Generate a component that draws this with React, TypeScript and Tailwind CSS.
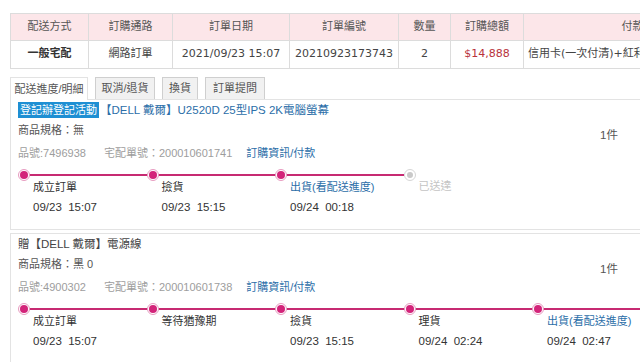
import React from "react";

type Step = { label: string; time?: string; link?: boolean; pending?: boolean };

type Item = {
  badge?: string;
  title: string;
  titleBlue?: boolean;
  spec: string;
  sku: string;
  ship: string;
  steps: Step[];
  lineToEnd?: boolean;
};

const cjk = '"Noto Sans CJK TC", "Noto Sans", sans-serif';
const body = { fontFamily: `"Liberation Sans", ${cjk}` };
const tableFont = { fontFamily: `"DejaVu Sans", ${cjk}` };

const heads = [
  { t: "配送方式", w: "w-[78px]" },
  { t: "訂購通路", w: "w-[84px]" },
  { t: "訂單日期", w: "w-[117px]" },
  { t: "訂單編號", w: "w-[109px]" },
  { t: "數量", w: "w-[52px]" },
  { t: "訂購總額", w: "w-[73px]" },
  { t: "付款方式", w: "w-[240px]" },
];

const items: Item[] = [
  {
    badge: "登記辦登記活動",
    title: "【DELL 戴爾】U2520D 25型IPS 2K電腦螢幕",
    titleBlue: true,
    spec: "商品規格：無",
    sku: "品號:7496938",
    ship: "宅配單號：200010601741",
    steps: [
      { label: "成立訂單", time: "09/23  15:07" },
      { label: "撿貨", time: "09/23  15:15" },
      { label: "出貨(看配送進度)", time: "09/24  00:18", link: true },
      { label: "已送達", pending: true },
    ],
  },
  {
    title: "贈【DELL 戴爾】電源線",
    spec: "商品規格：黑 0",
    sku: "品號:4900302",
    ship: "宅配單號：200010601738",
    lineToEnd: true,
    steps: [
      { label: "成立訂單", time: "09/23  15:07" },
      { label: "等待猶豫期" },
      { label: "撿貨", time: "09/23  15:15" },
      { label: "理貨", time: "09/24  02:24" },
      { label: "出貨(看配送進度)", time: "09/24  02:47", link: true },
    ],
  },
];

function Dot({ pending }: { pending?: boolean }) {
  return pending ? (
    <span className="flex h-[12px] w-[12px] items-center justify-center rounded-full border border-[#d6d6d6] bg-white">
      <span className="h-[6px] w-[6px] rounded-full bg-[#c9c9c9]" />
    </span>
  ) : (
    <span className="flex h-[12px] w-[12px] items-center justify-center rounded-full border border-[#e79bc0] bg-white">
      <span className="h-[8px] w-[8px] rounded-full bg-[#d3247a]" />
    </span>
  );
}

function Timeline({ steps, lineToEnd }: { steps: Step[]; lineToEnd?: boolean }) {
  return (
    <div className="relative mt-[8px] flex">
      <div
        className={`absolute top-[5px] left-[6px] h-[2px] bg-[#c72a72] ${lineToEnd ? "w-[700px]" : "w-[380px]"}`}
      />
      {steps.map((s, i) => (
        <div key={s.label + i} className="relative w-[128.5px] shrink-0">
          <Dot pending={s.pending} />
          {s.pending ? (
            <div className="absolute top-[9px] left-[15px] text-[11px] leading-[16px] text-[#c4c4c4]">{s.label}</div>
          ) : (
            <div className="pl-[15px]">
              <div
                className={`-mt-[2px] text-[11px] leading-[16px] whitespace-nowrap ${s.link ? "text-[#2b6ea8]" : "text-[#333]"}`}
              >
                {s.label}
              </div>
              {s.time && (
                <div className="mt-[4px] text-[11.5px] leading-[16px] whitespace-pre text-[#333]">{s.time}</div>
              )}
            </div>
          )}
        </div>
      ))}
    </div>
  );
}

function ItemCard({ item, first }: { item: Item; first?: boolean }) {
  return (
    <div
      className={`w-[630px] overflow-hidden border border-r-0 border-[#e3e3e3] px-[7px] pt-[2px] ${first ? "h-[131px]" : "mt-[3px] h-[130px]"}`}
    >
      <div className="flex">
        <div className="min-w-0 flex-1">
          <div className="flex h-[16px] items-center text-[11.5px] leading-[16px] whitespace-nowrap">
            {item.badge && (
              <span className="mr-[1px] bg-[#1e8fd3] px-[2px] text-[11px] text-white">{item.badge}</span>
            )}
            <span className={item.titleBlue ? "text-[#2b6ea8]" : "text-[#444]"}>{item.title}</span>
          </div>
          <div className="mt-[4px] text-[11px] leading-[16px] text-[#555]">{item.spec}</div>
          <div className="mt-[7px] flex gap-[18px] text-[11px] leading-[16px] whitespace-nowrap text-[#9d9d9d]">
            <span>{item.sku}</span>
            <span>{item.ship}</span>
            <span className="-ml-[4px] text-[#2b6ea8]">訂購資訊/付款</span>
          </div>
        </div>
        <div className="w-[33px] pt-[25px] text-[11.5px] leading-[16px] text-[#555]">1件</div>
      </div>
      <Timeline steps={item.steps} lineToEnd={item.lineToEnd} />
    </div>
  );
}

export default function App() {
  return (
    <div className="h-[362px] w-[640px] overflow-hidden bg-white pl-[10px] pt-[13px]" style={body}>
      <table className="w-[753px] table-fixed border-collapse text-[11px]" style={tableFont}>
        <thead>
          <tr className="h-[27px] bg-[#fce6e9]">
            {heads.map((h) => (
              <th key={h.t} className={`${h.w} border border-[#dcdcdc] font-normal text-[#555]`}>
                {h.t}
              </th>
            ))}
          </tr>
        </thead>
        <tbody>
          <tr className="h-[28px] text-center text-[#444]">
            <td className="border border-[#dcdcdc] font-bold text-[#333]">一般宅配</td>
            <td className="border border-[#dcdcdc]">網路訂單</td>
            <td className="border border-[#dcdcdc]">2021/09/23 15:07</td>
            <td className="border border-[#dcdcdc]">20210923173743</td>
            <td className="border border-[#dcdcdc]">2</td>
            <td className="border border-[#dcdcdc] text-[#b8323c]">$14,888</td>
            <td className="border border-[#dcdcdc] pl-[4px] text-left whitespace-nowrap">信用卡(一次付清)+紅利折抵</td>
          </tr>
        </tbody>
      </table>

      <div className="mt-[8px] flex items-end gap-[7px] text-[11px] whitespace-nowrap text-[#555]">
        <div className="relative -mb-px flex h-[23px] w-[78px] items-center justify-center border border-b-0 border-[#e3e3e3] bg-white">
          配送進度/明細
        </div>
        <div className="flex h-[22px] w-[60px] items-center justify-center border border-b-0 border-[#cfcfcf] bg-[#f1f1f1]">
          取消/退貨
        </div>
        <div className="flex h-[22px] w-[36px] items-center justify-center border border-b-0 border-[#cfcfcf] bg-[#f1f1f1]">
          換貨
        </div>
        <div className="flex h-[22px] w-[60px] items-center justify-center border border-b-0 border-[#cfcfcf] bg-[#f1f1f1]">
          訂單提問
        </div>
      </div>

      <ItemCard item={items[0]} first />
      <ItemCard item={items[1]} />
    </div>
  );
}
